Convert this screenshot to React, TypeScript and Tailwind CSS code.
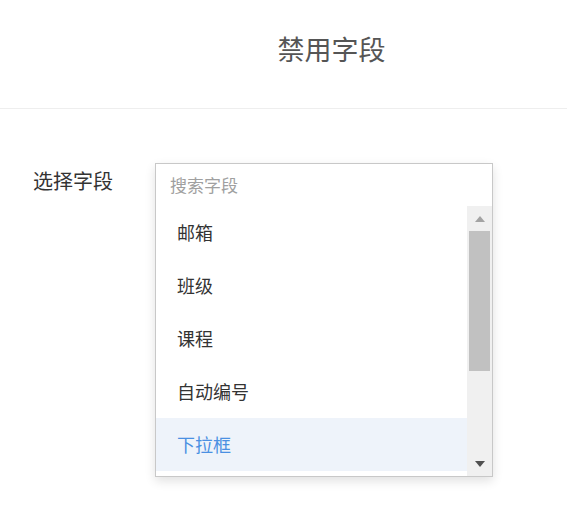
import React from 'react';

const fields = ['邮箱', '班级', '课程', '自动编号', '下拉框'];

const App: React.FC = () => {
  const active = '下拉框';
  return (
    <div
      className="w-[567px] h-[507px] bg-white overflow-hidden"
      style={{ fontFamily: '"Noto Sans CJK SC", "Noto Sans", sans-serif' }}
    >
      <div className="h-[109px] border-b border-[#eeeeee] flex items-center justify-center pl-[96px]">
        <h2 className="text-[27px] text-[#555555] font-normal pb-[10px]">禁用字段</h2>
      </div>
      <div className="flex pt-[54px] pl-[33px]">
        <label className="w-[122px] text-[20px] leading-[36px] text-[#333333]">选择字段</label>
        <div className="w-[338px] border border-[#c8c8c8] bg-white shadow-[0_4px_10px_rgba(0,0,0,0.12)]">
          <div className="h-[42px] flex items-center pl-[14px] text-[17px] text-[#a0a0a0]">搜索字段</div>
          <div className="flex h-[270px]">
            <ul className="flex-1 overflow-hidden">
              {fields.map((f) => (
                <li
                  key={f}
                  className={
                    f === active
                      ? 'h-[53px] flex items-center pl-[21px] text-[18px] bg-[#eef3fa] text-[#4a90e2]'
                      : 'h-[53px] flex items-center pl-[21px] text-[18px] text-[#333333]'
                  }
                >
                  {f}
                </li>
              ))}
            </ul>
            <div className="w-[25px] bg-[#f0f0f0] flex flex-col items-center">
              <div className="h-[25px] flex items-center justify-center">
                <svg width="10" height="6" viewBox="0 0 10 6">
                  <path d="M5 0 L10 6 L0 6 Z" fill="#a3a3a3" />
                </svg>
              </div>
              <div className="w-[21px] h-[140px] bg-[#c1c1c1]" />
              <div className="flex-1" />
              <div className="h-[25px] flex items-center justify-center">
                <svg width="10" height="6" viewBox="0 0 10 6">
                  <path d="M0 0 L10 0 L5 6 Z" fill="#505050" />
                </svg>
              </div>
            </div>
          </div>
        </div>
      </div>
    </div>
  );
};

export default App;
